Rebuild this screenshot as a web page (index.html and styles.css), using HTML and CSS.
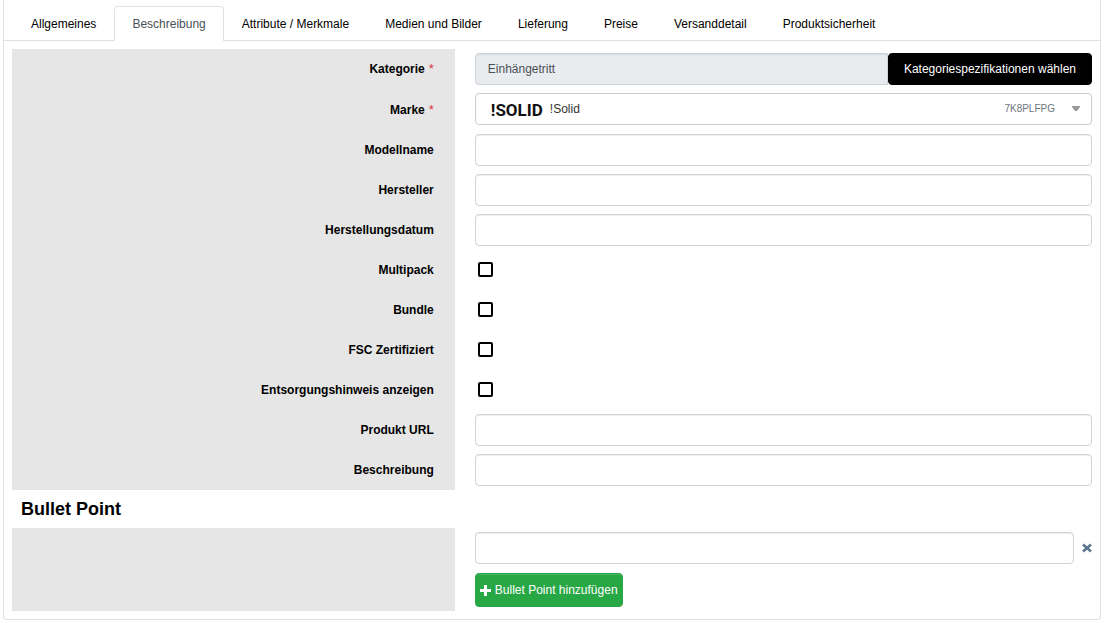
FILE: index.html
```html
<!DOCTYPE html>
<html lang="de">
<head>
<meta charset="utf-8">
<title>Produkt – Beschreibung</title>
<link rel="stylesheet" href="styles.css">
</head>
<body>
<nav class="tabs">
  <a class="tab" href="#allgemeines">Allgemeines</a>
  <a class="tab tab-active" href="#beschreibung" aria-current="page">Beschreibung</a>
  <a class="tab" href="#attribute">Attribute / Merkmale</a>
  <a class="tab" href="#medien">Medien und Bilder</a>
  <a class="tab" href="#lieferung">Lieferung</a>
  <a class="tab" href="#preise">Preise</a>
  <a class="tab" href="#versand">Versanddetail</a>
  <a class="tab" href="#sicherheit">Produktsicherheit</a>
</nav>
<form class="panel" id="beschreibung">
  <div class="row">
    <label class="label" for="kategorie">Kategorie <span class="required">*</span></label>
    <div class="field group">
      <input class="input input-locked" id="kategorie" type="text" value="Einhängetritt" readonly>
      <button class="button button-dark" type="button">Kategoriespezifikationen wählen</button>
    </div>
  </div>
  <div class="row row-brand">
    <label class="label" for="marke">Marke <span class="required">*</span></label>
    <div class="field brand">
      <select class="input brand-select" id="marke"><option>!Solid</option></select>
      <span class="brand-logo" aria-hidden="true">!SOLID</span>
      <span class="brand-code">7K8PLFPG</span>
      <svg class="brand-arrow" viewBox="0 0 8 5" aria-hidden="true"><path d="M0 0h8v1L5 5H3L0 1z"/></svg>
    </div>
  </div>
  <div class="row">
    <label class="label" for="modell">Modellname</label>
    <div class="field"><input class="input" id="modell" type="text"></div>
  </div>
  <div class="row">
    <label class="label" for="hersteller">Hersteller</label>
    <div class="field"><input class="input" id="hersteller" type="text"></div>
  </div>
  <div class="row">
    <label class="label" for="datum">Herstellungsdatum</label>
    <div class="field"><input class="input" id="datum" type="text"></div>
  </div>
  <div class="row">
    <label class="label" for="multipack">Multipack</label>
    <div class="field"><input class="check" id="multipack" type="checkbox"></div>
  </div>
  <div class="row">
    <label class="label" for="bundle">Bundle</label>
    <div class="field"><input class="check" id="bundle" type="checkbox"></div>
  </div>
  <div class="row">
    <label class="label" for="fsc">FSC Zertifiziert</label>
    <div class="field"><input class="check" id="fsc" type="checkbox"></div>
  </div>
  <div class="row">
    <label class="label" for="entsorgung">Entsorgungshinweis anzeigen</label>
    <div class="field"><input class="check" id="entsorgung" type="checkbox"></div>
  </div>
  <div class="row">
    <label class="label" for="url">Produkt URL</label>
    <div class="field"><input class="input" id="url" type="text"></div>
  </div>
  <div class="row">
    <label class="label" for="text">Beschreibung</label>
    <div class="field"><input class="input" id="text" type="text"></div>
  </div>
  <h2 class="heading" id="bullets">Bullet Point</h2>
  <div class="row">
    <div class="label"></div>
    <div class="field stack">
      <div class="bullet">
        <input class="input" type="text" aria-labelledby="bullets">
        <button class="remove" type="button" aria-label="Entfernen">
          <svg class="remove-icon" viewBox="0 0 10 10" aria-hidden="true"><path d="M1 1.5l8 7M9 1.5l-8 7"/></svg>
        </button>
      </div>
      <button class="button button-add" type="button">
        <svg class="plus" viewBox="0 0 11 11" aria-hidden="true"><path d="M5.5 0v11M0 5.5h11"/></svg>
        Bullet Point hinzufügen
      </button>
    </div>
  </div>
</form>
</body>
</html>
```
FILE: styles.css
```css
* {
  box-sizing: border-box;
}

body {
  margin: 0;
  padding: 0 6px 0 3px;
  background: #fff;
  color: #000;
  font: 12px/18px "Liberation Sans", Arial, sans-serif;
}

.tabs {
  display: flex;
  height: 41px;
  padding: 6px 0 0 9px;
  border: solid #dee2e6;
  border-width: 0 1px 1px;
}

.tab {
  height: 35px;
  padding: 8px 17px;
  border: 1px solid transparent;
  border-bottom: 0;
  border-radius: 4px 4px 0 0;
  color: #000;
  text-decoration: none;
  white-space: nowrap;
}

.tab-active {
  border-color: #dee2e6;
  background: #fff;
  color: #495057;
}

.panel {
  padding: 8px;
  border: 1px solid #dee2e6;
  border-top: 0;
  border-radius: 0 0 4px 4px;
}

.row {
  display: grid;
  grid-template-columns: 41fr 59fr;
  min-height: 40px;
}

.row-brand {
  min-height: 41px;
}

.label {
  display: flex;
  align-items: center;
  justify-content: flex-end;
  gap: 4px;
  padding: 0 21px 0 8px;
  background: #e6e6e6;
  font-weight: bold;
}

.required {
  color: #dc3545;
  font-size: 13px;
  font-weight: normal;
}

.field {
  display: flex;
  align-items: flex-start;
  min-width: 0;
  padding: 4px 0 4px 20px;
}

.input {
  flex: 1;
  min-width: 0;
  height: 32px;
  padding: 0 12px;
  border: 1px solid #ced4da;
  border-radius: 4px;
  background: #fff;
  box-shadow: inset 0 1px 1px #00000013;
  color: #333;
  font: inherit;
}

.input-locked {
  border-radius: 4px 0 0 4px;
  background: #e9ecef;
  color: #495057;
}

.button {
  display: flex;
  align-items: center;
  justify-content: center;
  height: 32px;
  padding: 0 15px;
  border: 1px solid #000;
  border-radius: 4px;
  color: #fff;
  font: inherit;
  white-space: nowrap;
}

.button-dark {
  background: #000;
}

.brand {
  position: relative;
}

.brand-select {
  appearance: none;
  padding: 0 100px 0 74px;
  border-color: #ccc;
  box-shadow: none;
}

.brand-logo,
.brand-code,
.brand-arrow {
  position: absolute;
  pointer-events: none;
}

.brand-logo {
  top: 12px;
  left: 36px;
  color: #111;
  font: bold 17px/18px Roboto, sans-serif;
}

.brand-code {
  top: 11px;
  right: 37px;
  color: #6c757d;
  font-size: 10px;
}

.brand-arrow {
  top: 17px;
  right: 12px;
  width: 8px;
  height: 5px;
  fill: #999;
}

.check {
  appearance: none;
  width: 15px;
  height: 15px;
  margin: 8px 0 0 3px;
  border: 2px solid #000;
  border-radius: 2px;
  background: #fff;
}

.check:checked {
  box-shadow: inset 0 0 0 2px #fff;
  background: #000;
}

.heading {
  margin: 0;
  padding: 8px 9px;
  font-size: 18px;
  line-height: 22px;
}

.stack {
  flex-direction: column;
  gap: 9px;
}

.bullet {
  display: flex;
  align-items: center;
  align-self: stretch;
  gap: 8px;
}

.remove {
  display: flex;
  padding: 0;
  border: 0;
  background: none;
}

.remove-icon {
  width: 10px;
  height: 10px;
  fill: none;
  stroke: #5b7691;
  stroke-width: 2.5;
}

.button-add {
  gap: 4px;
  height: 34px;
  padding: 0 4px;
  border-color: #28a745;
  background: #28a745;
  box-shadow: inset 0 1px #ffffff26;
}

.plus {
  width: 11px;
  height: 11px;
  stroke: #fff;
  stroke-width: 3;
}
```
